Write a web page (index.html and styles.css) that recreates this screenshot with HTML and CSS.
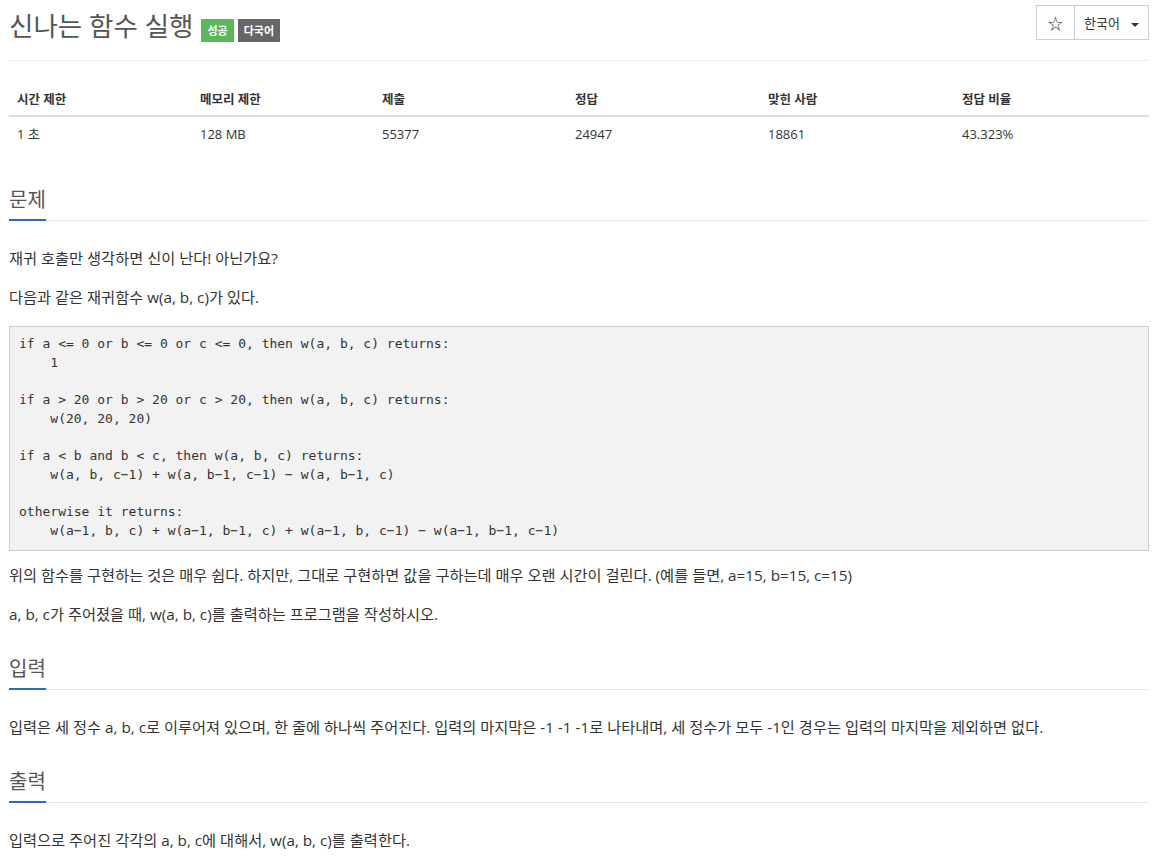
FILE: index.html
```html
<!DOCTYPE html>
<html lang="ko">
<head>
<meta charset="utf-8">
<title>신나는 함수 실행</title>
<link rel="stylesheet" href="styles.css">
</head>
<body>
<div class="page">
  <div class="page-header">
    <h1 class="title">신나는 함수 실행 <span class="badge badge-success">성공</span><span class="badge badge-gray">다국어</span></h1>
    <div class="btn-group">
      <button class="btn btn-star">☆</button>
      <button class="btn btn-lang">한국어 <span class="caret"></span></button>
    </div>
  </div>

  <table class="info">
    <thead>
      <tr>
        <th class="c1">시간 제한</th>
        <th class="c2">메모리 제한</th>
        <th class="c3">제출</th>
        <th class="c4">정답</th>
        <th class="c5">맞힌 사람</th>
        <th>정답 비율</th>
      </tr>
    </thead>
    <tbody>
      <tr>
        <td>1 초</td>
        <td>128 MB</td>
        <td>55377</td>
        <td>24947</td>
        <td>18861</td>
        <td>43.323%</td>
      </tr>
    </tbody>
  </table>

  <section class="section">
    <div class="headline"><h2><span>문제</span></h2></div>
    <div class="text">
      <p>재귀 호출만 생각하면 신이 난다! 아닌가요?</p>
      <p>다음과 같은 재귀함수 w(a, b, c)가 있다.</p>
<pre>if a &lt;= 0 or b &lt;= 0 or c &lt;= 0, then w(a, b, c) returns:
    1

if a &gt; 20 or b &gt; 20 or c &gt; 20, then w(a, b, c) returns:
    w(20, 20, 20)

if a &lt; b and b &lt; c, then w(a, b, c) returns:
    w(a, b, c−1) + w(a, b−1, c−1) − w(a, b−1, c)

otherwise it returns:
    w(a−1, b, c) + w(a−1, b−1, c) + w(a−1, b, c−1) − w(a−1, b−1, c−1)</pre>
      <p>위의 함수를 구현하는 것은 매우 쉽다. 하지만, 그대로 구현하면 값을 구하는데 매우 오랜 시간이 걸린다. (예를 들면, a=15, b=15, c=15)</p>
      <p>a, b, c가 주어졌을 때, w(a, b, c)를 출력하는 프로그램을 작성하시오.</p>
    </div>
  </section>

  <section class="section">
    <div class="headline"><h2><span>입력</span></h2></div>
    <div class="text">
      <p>입력은 세 정수 a, b, c로 이루어져 있으며, 한 줄에 하나씩 주어진다. 입력의 마지막은 -1 -1 -1로 나타내며, 세 정수가 모두 -1인 경우는 입력의 마지막을 제외하면 없다.</p>
    </div>
  </section>

  <section class="section">
    <div class="headline"><h2><span>출력</span></h2></div>
    <div class="text">
      <p>입력으로 주어진 각각의 a, b, c에 대해서, w(a, b, c)를 출력한다.</p>
    </div>
  </section>
</div>
</body>
</html>
```

FILE: styles.css
```css
html, body {
  margin: 0;
  padding: 0;
  background: #fff;
}
body {
  font-family: "Open Sans", "Noto Sans CJK KR", sans-serif;
  font-size: 15px;
  line-height: 1.42857;
  color: #333;
}
.page {
  width: 1140px;
  padding: 0 20px 0 9px;
}
.page-header {
  display: flex;
  justify-content: space-between;
  align-items: flex-start;
  border-bottom: 1px solid #eee;
  padding-bottom: 10px;
  margin-bottom: 20px;
}
.title {
  margin: 3px 0 0 0;
  font-size: 26.5px;
  font-weight: 400;
  line-height: 47px;
  color: #555;
  display: flex;
  align-items: center;
}
.badge {
  display: inline-block;
  font-size: 11px;
  font-weight: 700;
  color: #fff;
  line-height: 23px;
  padding: 0 6px;
  margin-top: 7px;
}
.badge-success {
  background: #5cb85c;
  margin-left: 8px;
}
.badge-gray {
  background: #666;
  margin-left: 4px;
}
.btn-group {
  display: flex;
  margin-top: 5px;
}
.btn {
  font-family: "Open Sans", "Noto Sans CJK KR", sans-serif;
  background: #fff;
  border: 1px solid #ccc;
  color: #333;
  height: 35px;
  font-size: 13px;
  padding: 0 12px;
  margin: 0;
}
.btn-star {
  width: 39px;
  font-size: 15px;
  padding: 0;
}
.btn-lang {
  border-left: none;
  width: 74px;
  padding: 0 0 0 9px;
  text-align: left;
}
.caret {
  display: inline-block;
  width: 0;
  height: 0;
  margin-left: 8px;
  vertical-align: middle;
  border-top: 4px solid #333;
  border-left: 4px solid transparent;
  border-right: 4px solid transparent;
}
.info {
  width: 100%;
  border-collapse: collapse;
  font-size: 13px;
  margin-bottom: 32px;
}
.info th, .info td {
  text-align: left;
  padding: 8px;
  line-height: 20px;
}
.info th {
  font-size: 12.5px;
  font-weight: 700;
  border-bottom: 2px solid #ddd;
  padding-top: 9px;
  padding-bottom: 5px;
}
.info td {
  border-top: 1px solid #ddd;
  padding-top: 7px;
}
.info .c1 { width: 167px; }
.info .c2 { width: 166px; }
.info .c3 { width: 177px; }
.info .c4 { width: 177px; }
.info .c5 { width: 178px; }
.section {
  margin-bottom: 0;
}
.headline {
  border-bottom: 1px dotted #c9d6ea;
  margin-bottom: 27px;
}
.headline h2 {
  margin: 0;
  font-size: 20px;
  font-weight: 400;
  line-height: 32px;
  color: #555;
}
.headline h2 span {
  display: inline-block;
  border-bottom: 2px solid #2d6cb5;
  margin-bottom: -1px;
  padding-bottom: 3px;
}
.text p {
  margin: 0 0 18px 0;
  line-height: 21px;
  font-size: 15.25px;
}
.text {
  padding-bottom: 10px;
}
pre {
  font-family: "DejaVu Sans Mono", monospace;
  font-size: 13px;
  line-height: 18.7px;
  color: #333;
  background: #f2f2f2;
  border: 1px solid #ccc;
  padding: 8px 9px 9px 9px;
  margin: 0 0 14px 0;
  white-space: pre;
}
```
